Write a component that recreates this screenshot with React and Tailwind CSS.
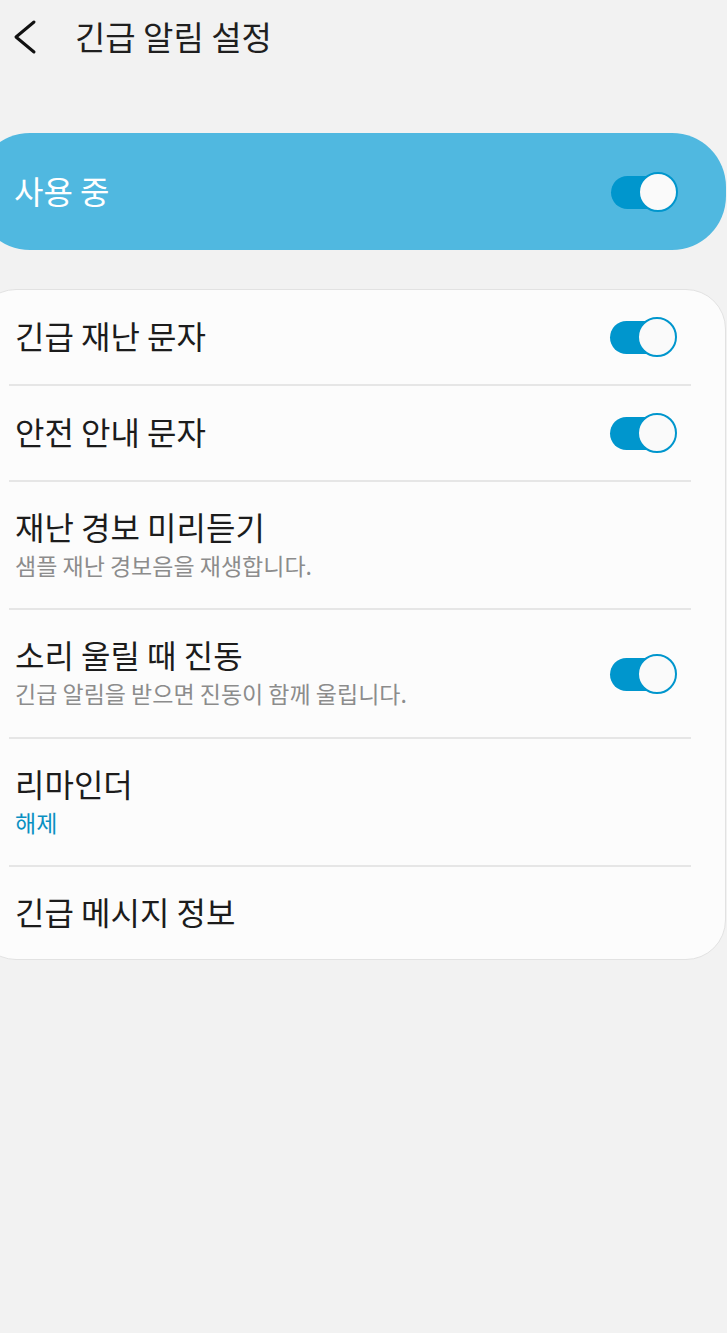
import React from 'react';

const Toggle = () => {
  return (
    <div className="relative w-[67px] h-[40px] shrink-0">
      {/* Track */}
      <div className="absolute left-0 top-[4px] w-[54px] h-[33px] rounded-full bg-[#0096cd]" />
      {/* Knob */}
      <div className="absolute right-0 top-0 w-[40px] h-[40px] rounded-full bg-[#fafafa] border-[2px] border-[#0096cd]" />
    </div>
  );
};

const Divider = () => <div className="h-[2px] ml-[32px] w-[682px] bg-[#e6e6e6]" />;

const Row = ({ title, sub, subBlue = false, toggle = false, height }) => {
  return (
    <div className={`flex items-center pl-[38px] pr-[48px] ${height}`}>
      <div className="flex-1 flex flex-col pb-[4px]">
        <div className="text-[32px] leading-[38px] text-[#1c1c1c]">{title}</div>
        {sub && (
          <div
            className={
              subBlue
                ? 'mt-[5px] text-[23px] leading-[30px] text-[#0a90c2]'
                : 'mt-[5px] text-[23px] leading-[30px] text-[#8c8c8c]'
            }
          >
            {sub}
          </div>
        )}
      </div>
      {toggle && <Toggle />}
    </div>
  );
};

const App = () => {
  return (
    <div className="min-h-[1333px] w-[727px] overflow-hidden bg-[#f2f2f2] font-['Noto_Sans_CJK_KR','Noto_Sans',sans-serif]">
      {/* Header */}
      <div className="h-[76px] flex items-center">
        <svg width="50" height="40" viewBox="0 0 50 40" className="shrink-0">
          <path d="M34 4 L16 19 L34 34" fill="none" stroke="#111" strokeWidth="3" strokeLinecap="round" strokeLinejoin="round" />
        </svg>
        <h1 className="ml-[25px] pb-[4px] text-[33px] leading-[40px] text-[#1f1f1f]">긴급 알림 설정</h1>
      </div>

      {/* Master switch */}
      <div className="mt-[57px] -ml-[24px] w-[750px] h-[117px] rounded-[54px] bg-[#50b8e0] flex items-center pl-[38px] pr-[48px]">
        <div className="flex-1 pb-[4px] text-[32px] leading-[38px] text-white">사용 중</div>
        <Toggle />
      </div>

      {/* Settings card */}
      <div className="mt-[39px] -ml-[24px] w-[750px] rounded-[40px] bg-[#fcfcfc] border border-[#e2e2e2]">
        <Row title="긴급 재난 문자" toggle height="h-[94px]" />
        <Divider />
        <Row title="안전 안내 문자" toggle height="h-[94px]" />
        <Divider />
        <Row title="재난 경보 미리듣기" sub="샘플 재난 경보음을 재생합니다." height="h-[126px]" />
        <Divider />
        <Row title="소리 울릴 때 진동" sub="긴급 알림을 받으면 진동이 함께 울립니다." toggle height="h-[127px]" />
        <Divider />
        <Row title="리마인더" sub="해제" subBlue height="h-[126px]" />
        <Divider />
        <Row title="긴급 메시지 정보" height="h-[92px]" />
      </div>
    </div>
  );
};

export default App;
